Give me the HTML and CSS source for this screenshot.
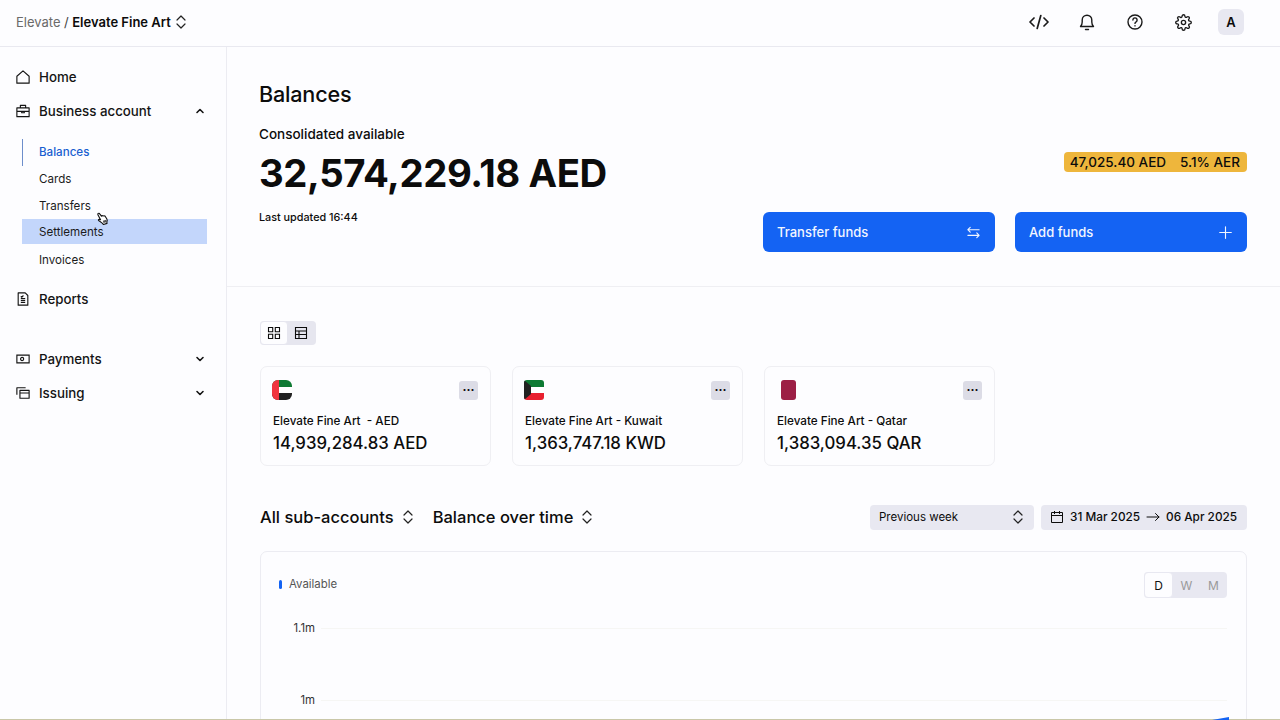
FILE: index.html
```html
<!DOCTYPE html>
<html lang="en">
<head>
    <meta charset="UTF-8">
    <meta name="viewport" content="width=device-width, initial-scale=1.0">
    <title>Balances</title>
    <link rel="stylesheet" href="styles.css">
</head>
<body>
    <svg class="defs" width="0" height="0">
        <symbol id="updown" viewBox="0 0 12 16">
            <path d="M2 6l4-4 4 4M2 10l4 4 4-4" fill="none" stroke="currentColor" stroke-width="1.2" stroke-linecap="round" stroke-linejoin="round"/>
        </symbol>
    </svg>
    <header class="topbar">
        <div class="crumbs">
            <span class="crumb-parent">Elevate</span>
            <span class="crumb-sep">/</span>
            <strong>Elevate Fine Art</strong>
            <svg class="updown"><use href="#updown"/></svg>
        </div>
        <div class="top-actions">
            <svg class="top-icon" viewBox="0 0 20 20" fill="none" stroke="currentColor" stroke-width="1.7" stroke-linecap="round" stroke-linejoin="round"><path d="M5 6l-4 4 4 4M15 6l4 4-4 4M11.800 3.500L8.200 16.500"/></svg>
            <svg class="top-icon" viewBox="0 0 20 20" fill="none" stroke="currentColor" stroke-width="1.4" stroke-linecap="round" stroke-linejoin="round"><path d="M3.500 14.500h13c-1.200-1.200-1.700-2.400-1.700-4.500V8a4.800 4.800 0 0 0-9.600 0v2c0 2.100-.5 3.300-1.700 4.500zM8.500 17.500h3"/></svg>
            <svg class="top-icon" viewBox="0 0 20 20" fill="none" stroke="currentColor" stroke-width="1.4" stroke-linecap="round" stroke-linejoin="round"><circle cx="10" cy="10" r="7"/><path d="M7.900 8a2.100 2.100 0 1 1 3.200 1.800c-.7.400-1.100.8-1.100 1.600M10 13.800v.1"/></svg>
            <svg class="top-icon gear" viewBox="0 0 24 24" fill="none" stroke="currentColor" stroke-width="1.900" stroke-linecap="round" stroke-linejoin="round"><circle cx="12" cy="12" r="3"/><path d="M19.400 15a1.650 1.650 0 0 0 .33 1.820l.06.06a2 2 0 1 1-2.830 2.830l-.06-.06a1.650 1.650 0 0 0-2.820 1.170V21a2 2 0 0 1-4 0v-.09a1.650 1.650 0 0 0-2.820-1.200l-.06.06a2 2 0 1 1-2.830-2.830l.06-.06A1.650 1.650 0 0 0 3.090 14H3a2 2 0 0 1 0-4h.09a1.650 1.650 0 0 0 1.200-2.820l-.06-.06a2 2 0 1 1 2.830-2.830l.06.06A1.650 1.650 0 0 0 10 3.090V3a2 2 0 0 1 4 0v.09a1.650 1.650 0 0 0 2.820 1.200l.06-.06a2 2 0 1 1 2.830 2.830l-.06.06A1.650 1.650 0 0 0 20.910 10H21a2 2 0 0 1 0 4h-.09a1.650 1.650 0 0 0-1.510 1z"/></svg>
            <div class="avatar">A</div>
        </div>
    </header>

    <div class="layout">
        <nav class="sidebar">
            <a class="nav-item">
                <svg class="nav-icon" viewBox="0 0 16 16" fill="none" stroke="currentColor" stroke-width="1.3" stroke-linejoin="round"><path d="M1 7.200L8 1l7 6.200V15H1z"/></svg>
                Home
            </a>
            <a class="nav-item">
                <svg class="nav-icon" viewBox="0 0 16 16" fill="none" stroke="currentColor" stroke-width="1.3" stroke-linejoin="round"><path d="M1 4.500h14v10H1zM5 4.500V1.500h6v3M1 8.500h14M6.500 8.500v1.500h3V8.500"/></svg>
                Business account
                <svg class="chevron" viewBox="0 0 10 10" fill="none" stroke="currentColor" stroke-width="1.6" stroke-linecap="round" stroke-linejoin="round"><path d="M2 6.500l3-3 3 3"/></svg>
            </a>
            <div class="subnav">
                <a class="sub-item active">Balances</a>
                <a class="sub-item">Cards</a>
                <a class="sub-item">Transfers</a>
                <a class="sub-item hovered">Settlements</a>
                <a class="sub-item">Invoices</a>
                <svg class="cursor" viewBox="0 0 14 16"><path d="M4 1.500c.8-.5 1.500 0 1.700.8l1 3 .4-.4c.5 0 .9.200 1 .6.500-.2 1-.1 1.200.4.500-.1 1 .1 1.200.6l.8 3.500c.2 1.200-.3 2.300-1 3l-.3 1.500H6l-.6-1.500-3-4.200c-.4-.7.300-1.400 1-1.100l1.200.9-1-5.700C3.500 2.300 3.500 1.800 4 1.500z" fill="#fff" stroke="#111" stroke-width="1.200" stroke-linejoin="round"/><path d="M6.500 10.500h4v2.500h-4z" fill="#555"/></svg>
            </div>
            <a class="nav-item nav-reports">
                <svg class="nav-icon" viewBox="0 0 16 16" fill="none" stroke="currentColor" stroke-width="1.300" stroke-linejoin="round"><path d="M2.500 1h8l3 3v11h-11zM5.500 7.500h5M5.500 9.800h5M5.500 12h5M5.500 5l1 1 2-2"/></svg>
                Reports
            </a>
            <a class="nav-item nav-payments">
                <svg class="nav-icon" viewBox="0 0 16 16" fill="none" stroke="currentColor" stroke-width="1.300"><path d="M1 3.500h14v9H1z"/><circle cx="7" cy="8" r="1.800"/></svg>
                Payments
                <svg class="chevron" viewBox="0 0 10 10" fill="none" stroke="currentColor" stroke-width="1.600" stroke-linecap="round" stroke-linejoin="round"><path d="M2 3.500l3 3 3-3"/></svg>
            </a>
            <a class="nav-item">
                <svg class="nav-icon" viewBox="0 0 16 16" fill="none" stroke="currentColor" stroke-width="1.300" stroke-linejoin="round"><path d="M1 10V2h10M4.500 5h10.500v9H4.500zM4.500 8H15"/></svg>
                Issuing
                <svg class="chevron" viewBox="0 0 10 10" fill="none" stroke="currentColor" stroke-width="1.600" stroke-linecap="round" stroke-linejoin="round"><path d="M2 3.500l3 3 3-3"/></svg>
            </a>
        </nav>

        <main class="main">
            <section class="summary">
                <div class="summary-left">
                    <h1>Balances</h1>
                    <div class="consolidated">Consolidated available</div>
                    <div class="total">32,574,229.18 AED</div>
                    <div class="updated">Last updated 16:44</div>
                </div>
                <div class="summary-right">
                    <div class="badge"><span>47,025.40 AED</span><span>5.1% AER</span></div>
                    <div class="actions">
                        <button class="action">
                            Transfer funds
                            <svg viewBox="0 0 16 16" fill="none" stroke="currentColor" stroke-width="1.200" stroke-linecap="round" stroke-linejoin="round"><path d="M14 5H2M4.500 2.500L2 5l2.500 2.500M2 11h12M11.500 8.500L14 11l-2.500 2.500"/></svg>
                        </button>
                        <button class="action">
                            Add funds
                            <svg viewBox="0 0 16 16" fill="none" stroke="currentColor" stroke-width="1.200" stroke-linecap="round"><path d="M8 1.800v12.400M1.800 8h12.400"/></svg>
                        </button>
                    </div>
                </div>
            </section>

            <section class="accounts">
                <div class="view-toggle">
                    <span class="view on">
                        <svg viewBox="0 0 14 14" fill="none" stroke="currentColor" stroke-width="1.100"><path d="M1.500 1.500h4.200v4.200H1.500zM8.300 1.500h4.200v4.200H8.300zM1.500 8.300h4.200v4.200H1.500zM8.300 8.300h4.200v4.200H8.300z"/></svg>
                    </span>
                    <span class="view">
                        <svg viewBox="0 0 14 14" fill="none" stroke="currentColor" stroke-width="1.100"><path d="M1.500 1.500h11v11h-11zM1.500 5h11M1.500 8.500h11M5 5v7.500"/></svg>
                    </span>
                </div>
                <div class="cards">
                    <div class="card">
                        <div class="card-top">
                            <svg class="flag" viewBox="0 0 20 20"><defs><clipPath id="round-big"><rect width="20" height="20" rx="6"/></clipPath><clipPath id="round-small"><rect width="20" height="20" rx="3"/></clipPath><clipPath id="round-qa"><rect x="5" width="15" height="20" rx="3"/></clipPath></defs><g clip-path="url(#round-big)"><rect width="20" height="7" fill="#0e7a33"/><rect y="7" width="20" height="6" fill="#fff"/><rect y="13" width="20" height="7" fill="#222"/><rect width="7" height="20" fill="#f0353f"/></g></svg>
                            <span class="more">···</span>
                        </div>
                        <div class="card-name">Elevate Fine Art&nbsp; - AED</div>
                        <div class="card-amount">14,939,284.83 AED</div>
                    </div>
                    <div class="card">
                        <div class="card-top">
                            <svg class="flag" viewBox="0 0 20 20"><g clip-path="url(#round-small)"><rect width="20" height="7" fill="#0e7a33"/><rect y="7" width="20" height="6" fill="#fff"/><rect y="13" width="20" height="7" fill="#e8202f"/><path d="M0 0l7 6v8l-7 6z" fill="#222"/></g></svg>
                            <span class="more">···</span>
                        </div>
                        <div class="card-name">Elevate Fine Art - Kuwait</div>
                        <div class="card-amount">1,363,747.18 KWD</div>
                    </div>
                    <div class="card">
                        <div class="card-top">
                            <svg class="flag" viewBox="0 0 20 20"><g clip-path="url(#round-qa)"><rect x="5" width="15" height="20" fill="#9c1f45"/></g></svg>
                            <span class="more">···</span>
                        </div>
                        <div class="card-name">Elevate Fine Art - Qatar</div>
                        <div class="card-amount">1,383,094.35 QAR</div>
                    </div>
                </div>

                <div class="chart-head">
                    <div class="chart-title">All sub-accounts <svg class="updown"><use href="#updown"/></svg></div>
                    <div class="chart-title">Balance over time <svg class="updown"><use href="#updown"/></svg></div>
                    <div class="period">Previous week <svg class="updown"><use href="#updown"/></svg></div>
                    <div class="dates">
                        <svg viewBox="0 0 14 14" fill="none" stroke="currentColor" stroke-width="1"><path d="M1.500 2.500h11v10h-11zM1.500 5.500h11M4.500 1v3M9.500 1v3"/></svg>
                        31 Mar 2025
                        <svg class="arrow" viewBox="0 0 14 10" fill="none" stroke="currentColor" stroke-width="1" stroke-linecap="round" stroke-linejoin="round"><path d="M1 5h12M9.500 1.500L13 5 9.500 8.500"/></svg>
                        06 Apr 2025
                    </div>
                </div>

                <div class="chart">
                    <div class="chart-top">
                        <div class="legend"><i></i>Available</div>
                        <div class="range"><span class="on">D</span><span>W</span><span>M</span></div>
                    </div>
                    <div class="grid-row"><span>1.1m</span></div>
                    <div class="grid-row"><span>1m</span></div>
                </div>
            </section>
        </main>
    </div>
    <div class="page-edge"><i></i></div>
</body>
</html>
```

FILE: styles.css
```css
* {
    box-sizing: border-box;
}
html, body {
    height: 100%;
}
body {
    margin: 0;
    height: 720px;
    overflow: hidden;
    position: relative;
    background: #fdfdff;
    color: #0c0c0c;
    font-family: Inter, "Liberation Sans", sans-serif;
}
.defs {
    position: absolute;
}
.updown {
    width: 12px;
    height: 16px;
    color: #222;
    flex-shrink: 0;
}

/* top bar */
.topbar {
    height: 47px;
    display: flex;
    align-items: center;
    justify-content: space-between;
    padding: 0 36px 2px 16px;
    border-bottom: 1px solid #e9e9f0;
}
.crumbs {
    display: flex;
    align-items: center;
    font-size: 13px;
    line-height: 16px;
}
.crumb-parent {
    color: #6a6a6a;
}
.crumb-sep {
    margin: 0 3.500px;
    color: #444;
}
.crumbs strong {
    font-weight: 600;
    margin-right: 4px;
}
.top-actions {
    display: flex;
    align-items: center;
    gap: 28px;
}
.top-icon {
    width: 20px;
    height: 20px;
    color: #1a1a1a;
}
.top-icon.gear {
    width: 17px;
    height: 17px;
    margin: 0 1.500px;
}
.avatar {
    width: 26px;
    height: 26px;
    margin-left: -3px;
    border-radius: 6px;
    background: #e8e8f1;
    display: flex;
    align-items: center;
    justify-content: center;
    font-size: 13px;
    font-weight: 600;
}

/* sidebar */
.layout {
    display: flex;
}
.sidebar {
    width: 227px;
    height: 673px;
    flex-shrink: 0;
    padding: 13px 19px 0 16px;
    border-right: 1px solid #ececf2;
}
.nav-item {
    height: 34px;
    display: flex;
    align-items: center;
    gap: 9px;
    font-size: 13.300px;
    font-weight: 500;
    color: #141414;
}
.nav-icon {
    width: 14px;
    height: 14px;
    flex-shrink: 0;
}
.chevron {
    width: 10px;
    height: 10px;
    margin-left: auto;
    margin-right: 2px;
}
.subnav {
    position: relative;
    margin: 11px 0 0 6px;
    display: flex;
    flex-direction: column;
}
.sub-item {
    height: 26.800px;
    display: flex;
    align-items: center;
    padding-left: 16px;
    font-size: 11.600px;
    color: #1c1c1c;
    border-left: 1px solid transparent;
}
.sub-item.active {
    color: #1a5fd0;
    font-weight: 500;
    border-left-color: #6d8ecb;
}
.sub-item.hovered {
    background: #c3d6fb;
    height: 25px;
    margin-bottom: 1.800px;
}
.cursor {
    position: absolute;
    left: 74px;
    top: 72px;
    width: 13px;
    height: 15px;
    transform: rotate(-18deg);
}
.nav-reports {
    margin-top: 9px;
}
.nav-payments {
    margin-top: 26px;
}

/* main */
.main {
    flex: 1;
    min-width: 0;
}
.summary {
    height: 240px;
    padding: 30px 33px 0 32px;
    display: flex;
    justify-content: space-between;
    border-bottom: 1px solid #efeff3;
}
h1 {
    margin: 0;
    font-size: 21.600px;
    line-height: 34px;
    font-weight: 500;
    letter-spacing: -0.2px;
}
.consolidated {
    margin-top: 15px;
    font-size: 13.500px;
    line-height: 16px;
    font-weight: 500;
}
.total {
    margin-top: 8px;
    font-size: 38.300px;
    line-height: 46px;
    font-weight: 700;
    letter-spacing: -0.4px;
}
.updated {
    margin-top: 15px;
    font-size: 10.800px;
    line-height: 14px;
    font-weight: 500;
}
.summary-right {
    display: flex;
    flex-direction: column;
    align-items: flex-end;
}
.badge {
    margin-top: 75px;
    height: 20px;
    padding: 0 7px 0 6px;
    display: flex;
    align-items: center;
    gap: 14px;
    border-radius: 4px;
    background: #eeb63c;
    font-size: 13.500px;
    font-weight: 500;
}
.actions {
    margin-top: 40px;
    display: flex;
    gap: 20px;
}
.action {
    width: 232px;
    height: 40px;
    padding: 0 14px;
    display: flex;
    align-items: center;
    justify-content: space-between;
    border: none;
    border-radius: 6px;
    background: #1463f3;
    color: #f2f6ff;
    font-family: inherit;
    font-size: 13px;
    font-weight: 500;
}
.action svg {
    width: 15px;
    height: 15px;
}

.accounts {
    padding: 34px 33px 0 33px;
}
.view-toggle {
    width: 56px;
    height: 24px;
    display: flex;
    border-radius: 4px;
    background: #e6e6ef;
}
.view {
    flex: 0 0 26px;
    display: flex;
    align-items: center;
    justify-content: center;
    border-radius: 4px;
}
.view.on {
    flex-basis: 28px;
    background: #fdfdff;
    border: 1px solid #e6e6ef;
}
.view svg {
    width: 14px;
    height: 14px;
}
.cards {
    margin-top: 21px;
    display: flex;
    gap: 21px;
}
.card {
    width: 231px;
    height: 100px;
    padding: 13px 13px 0 12px;
    border: 1px solid #efeff3;
    border-radius: 7px;
}
.card-top {
    display: flex;
    justify-content: space-between;
    align-items: center;
    height: 20px;
}
.flag {
    width: 20px;
    height: 20px;
    margin-left: -1px;
}
.more {
    width: 19px;
    height: 19px;
    margin-right: -1px;
    display: flex;
    align-items: center;
    justify-content: center;
    border-radius: 3px;
    background: #dcdce6;
    font-size: 12px;
    font-weight: 700;
    line-height: 1;
}
.card-name {
    margin-top: 14px;
    font-size: 11.700px;
    line-height: 14px;
    font-weight: 500;
}
.card-amount {
    margin-top: 5px;
    font-size: 16.800px;
    line-height: 20px;
    font-weight: 500;
}

.chart-head {
    margin-top: 36px;
    height: 30px;
    display: flex;
    align-items: center;
}
.chart-title {
    display: flex;
    align-items: center;
    gap: 8px;
    margin-right: 19px;
    font-size: 16.500px;
    font-weight: 500;
}
.period {
    margin-left: auto;
    width: 164px;
    height: 25px;
    padding: 0 10px 0 9px;
    display: flex;
    align-items: center;
    justify-content: space-between;
    border-radius: 4px;
    background: #e8e8f1;
    font-size: 11.500px;
}
.dates {
    margin-left: 7px;
    width: 206px;
    height: 25px;
    padding: 0 9px;
    display: flex;
    align-items: center;
    gap: 6px;
    border-radius: 4px;
    background: #e8e8f1;
    font-size: 11.800px;
    font-weight: 500;
    white-space: nowrap;
}
.dates svg {
    width: 14px;
    height: 14px;
    flex-shrink: 0;
}
.dates .arrow {
    width: 14px;
    height: 10px;
}

.chart {
    margin-top: 19px;
    height: 200px;
    border: 1px solid #ececf2;
    border-radius: 7px;
    padding: 20px 19px 0 18px;
}
.chart-top {
    display: flex;
    justify-content: space-between;
    height: 26px;
    margin-bottom: -6px;
}
.legend {
    display: flex;
    align-items: center;
    gap: 7px;
    height: 24px;
    font-size: 11.400px;
    color: #555;
}
.legend i {
    width: 3px;
    height: 9px;
    border-radius: 2px;
    background: #1463f3;
}
.range {
    display: flex;
    width: 83px;
    height: 26px;
    border-radius: 4px;
    background: #e8e8f1;
    color: #9a9a9a;
    font-size: 12px;
}
.range span {
    flex: 1;
    display: flex;
    align-items: center;
    justify-content: center;
}
.range .on {
    background: #fdfdff;
    border: 1px solid #e8e8f1;
    border-radius: 4px;
    color: #111;
}
.grid-row {
    height: 72px;
    display: flex;
    align-items: center;
    font-size: 11.400px;
    color: #333;
}
.grid-row span {
    width: 36px;
    text-align: right;
}
.grid-row::after {
    content: "";
    flex: 1;
    margin-left: 6px;
    border-top: 1px solid #f6f6f4;
}
.page-edge {
    position: absolute;
    left: 0;
    right: 0;
    bottom: 0;
    height: 1px;
    background: #c9c7a8;
}
.page-edge i {
    position: absolute;
    left: 1212px;
    bottom: 0;
    width: 17px;
    height: 3px;
    background: #1463f3;
    clip-path: polygon(0 100%, 100% 0, 100% 100%);
}
```
